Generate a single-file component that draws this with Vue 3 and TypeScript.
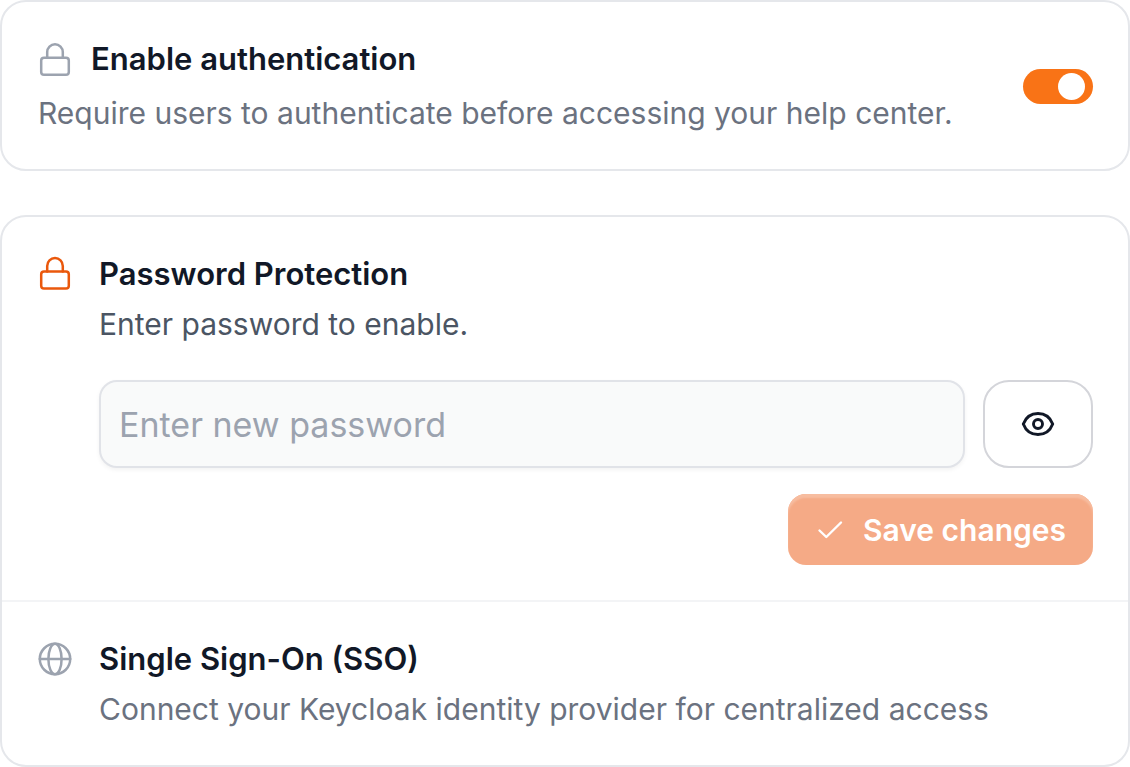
<script setup lang="ts">
import { ref } from 'vue'

const authEnabled = ref<boolean>(true)
const password = ref<string>('')
const revealed = ref<boolean>(false)
</script>

<template>
  <main class="settings">
    <section class="card auth">
      <div class="auth-text">
        <div class="auth-head">
          <svg class="icon muted" viewBox="0 0 35 35" aria-hidden="true">
            <rect x="3.2" y="16.2" width="27.6" height="17" rx="2.8" />
            <path d="M9.200 16.200v-5.600a7.800 7.800 0 0 1 15.600 0v5.600" />
          </svg>
          <label for="auth-toggle" class="title">Enable authentication</label>
        </div>
        <p id="auth-desc" class="desc">Require users to authenticate before accessing your help center.</p>
      </div>
      <input
        id="auth-toggle"
        v-model="authEnabled"
        class="toggle"
        type="checkbox"
        role="switch"
        aria-describedby="auth-desc"
      />
    </section>

    <section class="card">
      <div class="method">
        <svg class="icon accent" viewBox="0 0 35 35" aria-hidden="true">
          <rect x="3.2" y="15" width="27.6" height="17" rx="2.8" />
          <path d="M9.200 15v-5.600a7.800 7.800 0 0 1 15.600 0v5.600" />
        </svg>
        <div class="method-body">
          <h2 class="title">Password Protection</h2>
          <p class="desc dark">Enter password to enable.</p>
          <form class="form" @submit.prevent>
            <div class="field-row">
              <input
                v-model="password"
                class="field"
                :type="revealed ? 'text' : 'password'"
                placeholder="Enter new password"
                aria-label="New password"
                autocomplete="new-password"
              />
              <button class="reveal" type="button" aria-label="Show password" @click="revealed = !revealed">
                <svg viewBox="0 0 36 36" aria-hidden="true">
                  <path d="M3.300 18C5.800 11.400 11.200 7.500 18 7.500S30.200 11.400 32.700 18C30.200 24.600 24.800 28.500 18 28.500S5.800 24.600 3.300 18Z" />
                  <circle cx="18" cy="18" r="4.500" />
                </svg>
              </button>
            </div>
            <button class="save" type="submit" :disabled="!password">
              <svg viewBox="0 0 30 30" aria-hidden="true">
                <path d="M4.500 15.500l6.800 6.500L26 7.500" />
              </svg>
              Save changes
            </button>
          </form>
        </div>
      </div>

      <div class="method divided">
        <svg class="icon muted" viewBox="0 0 35 35" aria-hidden="true">
          <circle cx="17" cy="17.500" r="15.200" />
          <ellipse cx="17" cy="17.500" rx="6.600" ry="15.200" />
          <path d="M1.800 17.500h30.400" />
        </svg>
        <div class="method-body">
          <h2 class="title">Single Sign-On (SSO)</h2>
          <p class="desc">Connect your Keycloak identity provider for centralized access</p>
        </div>
      </div>
    </section>
  </main>
</template>

<style>
body {
  margin: 0;
  background: #fff;
}
</style>

<style scoped>
.settings {
  display: flex;
  flex-direction: column;
  gap: 44px;
  font-family: Inter, "Liberation Sans", sans-serif;
  font-size: 30px;
  line-height: 42px;
  color: #111827;
}

.settings *,
.settings *::before {
  box-sizing: border-box;
}

.card {
  border: 2px solid #e5e7eb;
  border-radius: 26px;
  background: #fff;
}

.auth {
  display: flex;
  align-items: center;
  justify-content: space-between;
  gap: 36px;
  padding: 36px 35px 35px 36px;
}

.auth-text {
  display: flex;
  flex-direction: column;
  gap: 12px;
}

.auth-head {
  display: flex;
  align-items: center;
  gap: 18px;
}

.title {
  margin: 0;
  font-size: 31px;
  font-weight: 600;
}

.desc {
  margin: 0;
  color: #6b7280;
}

.desc.dark {
  color: #4b5563;
}

.icon {
  flex: none;
  width: 35px;
  height: 42px;
  fill: none;
  stroke: currentColor;
  stroke-width: 2.5;
  stroke-linecap: round;
  stroke-linejoin: round;
}

.muted {
  color: #9ca3af;
}

.accent {
  color: #ea580c;
}

.toggle {
  flex: none;
  appearance: none;
  display: flex;
  align-items: center;
  width: 70px;
  height: 35px;
  margin: 0;
  padding: 0 8px;
  border-radius: 18px;
  background: #d1d5db;
  cursor: pointer;
}

.toggle::before {
  content: "";
  width: 27px;
  height: 27px;
  border-radius: 50%;
  background: #fff;
}

.toggle:checked {
  justify-content: flex-end;
  background: #f97316;
}

.method {
  display: flex;
  align-items: flex-start;
  gap: 26px;
  padding: 36px 35px 35px 36px;
}

.divided {
  border-top: 2px solid #f3f4f6;
}

.method-body {
  flex: 1;
  min-width: 0;
}

.method-body .desc {
  margin-top: 8px;
}

.form {
  display: flex;
  flex-direction: column;
  align-items: flex-end;
  gap: 26px;
  margin-top: 35px;
}

.field-row {
  display: flex;
  gap: 18px;
  width: 100%;
}

.field {
  flex: 1;
  min-width: 0;
  height: 88px;
  padding: 0 18px;
  border: 2px solid #e1e3e8;
  border-radius: 18px;
  background: #f9fafa;
  box-shadow: 0 2px 4px rgba(0, 0, 0, 0.05);
  color: #111827;
  font: inherit;
  font-size: 34px;
}

.field::placeholder {
  color: #9ca3af;
  opacity: 1;
}

.reveal {
  display: flex;
  align-items: center;
  justify-content: center;
  width: 110px;
  height: 88px;
  padding: 0;
  border: 2px solid #d4d5da;
  border-radius: 26px;
  background: #fff;
  color: #111827;
  cursor: pointer;
}

.reveal svg {
  width: 36px;
  height: 36px;
  fill: none;
  stroke: currentColor;
  stroke-width: 2.9;
  stroke-linejoin: round;
}

.save {
  display: flex;
  align-items: center;
  gap: 18px;
  height: 71px;
  padding: 0 27px;
  border: 0;
  border-radius: 18px;
  background: #f5aa86;
  box-shadow: inset 0 4px 2px #f7bda0;
  color: #fff;
  font: inherit;
  font-weight: 600;
}

.save svg {
  width: 30px;
  height: 30px;
  fill: none;
  stroke: currentColor;
  stroke-width: 2.4;
  stroke-linecap: round;
  stroke-linejoin: round;
}
</style>
